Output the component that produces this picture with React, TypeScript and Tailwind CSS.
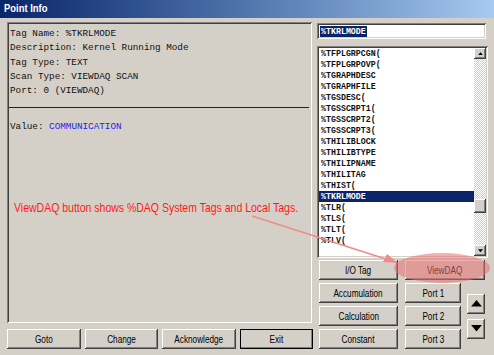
const raised =
  "shadow-[inset_-1px_-1px_0_#404040,inset_1px_1px_0_#ffffff,inset_-2px_-2px_0_#808080,inset_2px_2px_0_#d4d0c8]";
const sunken =
  "shadow-[inset_1px_1px_0_#808080,inset_-1px_-1px_0_#ffffff,inset_2px_2px_0_#404040,inset_-2px_-2px_0_#d4d0c8]";
const sans = "font-['Liberation_Sans',Arial,sans-serif]";
const mono = "font-['Liberation_Mono',monospace]";
// the screenshot uses a narrow UI face; squeeze Arial-width text to match
const squeeze = "inline-block whitespace-nowrap scale-x-[0.82]";

const tags = [
  "%TFPLGRPCGN(",
  "%TFPLGRPOVP(",
  "%TGRAPHDESC",
  "%TGRAPHFILE",
  "%TGSDESC(",
  "%TGSSCRPT1(",
  "%TGSSCRPT2(",
  "%TGSSCRPT3(",
  "%THILIBLOCK",
  "%THILIBTYPE",
  "%THILIPNAME",
  "%THILITAG",
  "%THIST(",
  "%TKRLMODE",
  "%TLR(",
  "%TLS(",
  "%TLT(",
  "%TLV(",
];

const info = [
  "Tag Name: %TKRLMODE",
  "Description: Kernel Running Mode",
  "Tag Type: TEXT",
  "Scan Type: VIEWDAQ SCAN",
  "Port: 0 (VIEWDAQ)",
];

const Btn = ({ label, className = "" }: { label: string; className?: string }) => (
  <button
    className={`flex items-center justify-center h-[20px] bg-[#d4d0c8] text-[10px] text-black ${raised} ${className}`}
  >
    <span className={squeeze}>{label}</span>
  </button>
);

const Triangle = ({ up, size }: { up: boolean; size: number }) => (
  <svg width={size} height={size / 2 + 1} viewBox="0 0 10 6">
    <polygon points={up ? "0,6 10,6 5,0" : "0,0 10,0 5,6"} fill="#000" />
  </svg>
);

export default function App() {
  return (
    <div className={`relative w-[494px] h-[355px] overflow-hidden bg-[#d4d0c8] ${sans}`}>
      <div className="h-[18px] flex items-center px-[4px] bg-gradient-to-r from-[#0a246a] to-[#a6caf0] text-white font-bold text-[11.5px]">
        <span className={`${squeeze} origin-left`}>Point Info</span>
      </div>

      <div className="flex gap-[4px] pl-[7px] pt-[4px]">
        {/* left column */}
        <div className="w-[306px] flex flex-col gap-[6px]">
          <div className={`w-[305px] h-[301px] pl-[3px] pr-[2px] pt-[5px] ${sunken} ${mono} text-[9.3px] text-[#111]`}>
            {info.map((line) => (
              <div key={line} className="leading-[14.25px] whitespace-pre">
                {line}
              </div>
            ))}
            <div className="mt-[9px] mr-[1px] -ml-[1px] h-px bg-[#222]" />
            <div className="mt-[12px] leading-[14px]">
              Value: <span className="text-[#1f1fe6]">COMMUNICATION</span>
            </div>
          </div>
          <div className="grid grid-cols-4 gap-[4px]">
            <Btn label="Goto" />
            <Btn label="Change" />
            <Btn label="Acknowledge" />
            <Btn label="Exit" className="outline outline-1 outline-black -outline-offset-1" />
          </div>
        </div>

        {/* right column */}
        <div className="w-[171px] flex flex-col">
          <div className={`mt-[1px] w-[169px] h-[16px] bg-white flex items-center pl-[3px] ${sunken}`}>
            <span className={`bg-[#0a246a] text-white font-bold text-[8.3px] leading-[11px] px-px ${mono}`}>
              %TKRLMODE
            </span>
          </div>

          <div className={`mt-[7px] h-[212px] bg-white flex p-[2px] ${sunken}`}>
            <div className={`flex-1 overflow-hidden ${mono} font-bold text-[8.3px] text-[#111]`}>
              {tags.map((t) => (
                <div
                  key={t}
                  className={`h-[11px] leading-[11px] pl-[2px] whitespace-pre ${
                    t === "%TKRLMODE" ? "bg-[#0a246a] text-white" : ""
                  }`}
                >
                  {t}
                </div>
              ))}
            </div>
            <div className="w-[12px] flex flex-col bg-[repeating-conic-gradient(#d4d0c8_0_25%,#ffffff_0_50%)] bg-[length:2px_2px]">
              <div className={`h-[11px] flex items-center justify-center bg-[#d4d0c8] ${raised}`}>
                <Triangle up size={5} />
              </div>
              <div className="flex-1">
                <div className={`mt-[140px] h-[14px] bg-[#d4d0c8] ${raised}`} />
              </div>
              <div className={`h-[11px] flex items-center justify-center bg-[#d4d0c8] ${raised}`}>
                <Triangle up={false} size={5} />
              </div>
            </div>
          </div>

          <div className="mt-[2px] pl-[2px] flex flex-col gap-[3px]">
            <div className="flex gap-[7px]">
              <Btn label="I/O Tag" className="w-[79px]" />
              <Btn label="ViewDAQ" className="w-[80px]" />
            </div>
            <div className="flex">
              <div className="w-[79px] flex flex-col gap-[3px]">
                <Btn label="Accumulation" />
                <Btn label="Calculation" />
                <Btn label="Constant" />
              </div>
              <div className="w-[56px] ml-[7px] flex flex-col gap-[3px]">
                <Btn label="Port 1" />
                <Btn label="Port 2" />
                <Btn label="Port 3" />
              </div>
              <div className="w-[18px] ml-[6px] flex flex-col justify-center gap-[5px]">
                <div className={`h-[20px] flex items-center justify-center bg-[#d4d0c8] ${raised}`}>
                  <Triangle up size={11} />
                </div>
                <div className={`h-[20px] flex items-center justify-center bg-[#d4d0c8] ${raised}`}>
                  <Triangle up={false} size={11} />
                </div>
              </div>
            </div>
          </div>
        </div>
      </div>

      {/* annotation overlay */}
      <div className="absolute left-[14px] top-[200px] text-[12.8px] leading-[16px] text-[#ff1a1a]">
        <span className={`${squeeze} origin-left`}>ViewDAQ button shows %DAQ System Tags and Local Tags.</span>
      </div>
      <svg className="absolute inset-0 pointer-events-none" width={494} height={355}>
        <line x1={252} y1={216} x2={392} y2={261} stroke="#ee8c8c" strokeWidth={1.6} />
        <polygon points="398,263 383,262 387,254" fill="#ee8c8c" />
        <ellipse cx={442} cy={268} rx={48} ry={15} fill="#e87070" fillOpacity={0.55} />
      </svg>
    </div>
  );
}
